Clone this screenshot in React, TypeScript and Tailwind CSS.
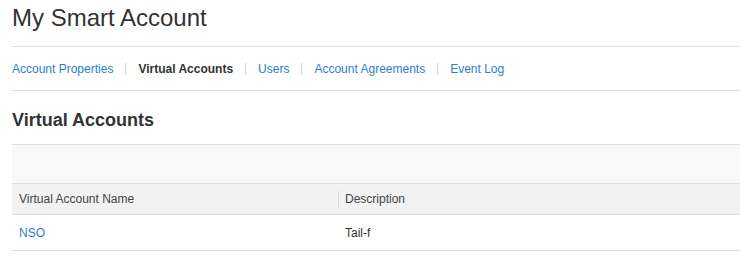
const tabs = [
  { label: "Account Properties", active: false },
  { label: "Virtual Accounts", active: true },
  { label: "Users", active: false },
  { label: "Account Agreements", active: false },
  { label: "Event Log", active: false },
];

const rows = [{ name: "NSO", description: "Tail-f" }];

const App = () => {
  return (
    <div className="min-h-[278px] bg-white pl-3 text-[#333] font-['Liberation_Sans',Arial,sans-serif]">
      <div className="h-[47px] border-b border-[#dedede] pt-[6px]">
        <h1 className="text-[24px] leading-[24px] font-normal text-[#333]">My Smart Account</h1>
      </div>

      <nav className="flex h-[44px] items-center border-b border-[#dedede] text-[12px] leading-4">
        {tabs.map((tab, i) => (
          <div key={tab.label} className="flex items-center">
            {i > 0 && <span className="mx-3 h-[12px] w-px bg-[#d6d6d6]" />}
            {tab.active ? (
              <span className="font-bold text-[#333]">{tab.label}</span>
            ) : (
              <a href="#" className="text-[#2a7fc9]">{tab.label}</a>
            )}
          </div>
        ))}
      </nav>

      <h2 className="mt-[19px] text-[18px] leading-[20px] font-bold text-[#333]">Virtual Accounts</h2>

      <div className="mt-[14px] border-t border-[#dcdcdc] text-[12px] leading-4">
        <div className="h-[39px] border-b border-[#dcdcdc] bg-[#f9f9f9]" />
        <div className="flex h-[31px] items-center border-b border-[#dcdcdc] bg-[#f2f2f2] text-[#444]">
          <div className="w-[326px] pl-[7px]">Virtual Account Name</div>
          <div className="flex items-center">
            <span className="h-[17px] w-px bg-[#d8d8d8]" />
            <span className="ml-[6px]">Description</span>
          </div>
        </div>
        {rows.map((row) => (
          <div key={row.name} className="flex h-[36px] items-center border-b border-[#dcdcdc]">
            <div className="w-[326px] pl-[7px]">
              <a href="#" className="text-[#2a7fc9]">{row.name}</a>
            </div>
            <div className="pl-[7px] text-[#333]">{row.description}</div>
          </div>
        ))}
      </div>
    </div>
  );
};

export default App;
